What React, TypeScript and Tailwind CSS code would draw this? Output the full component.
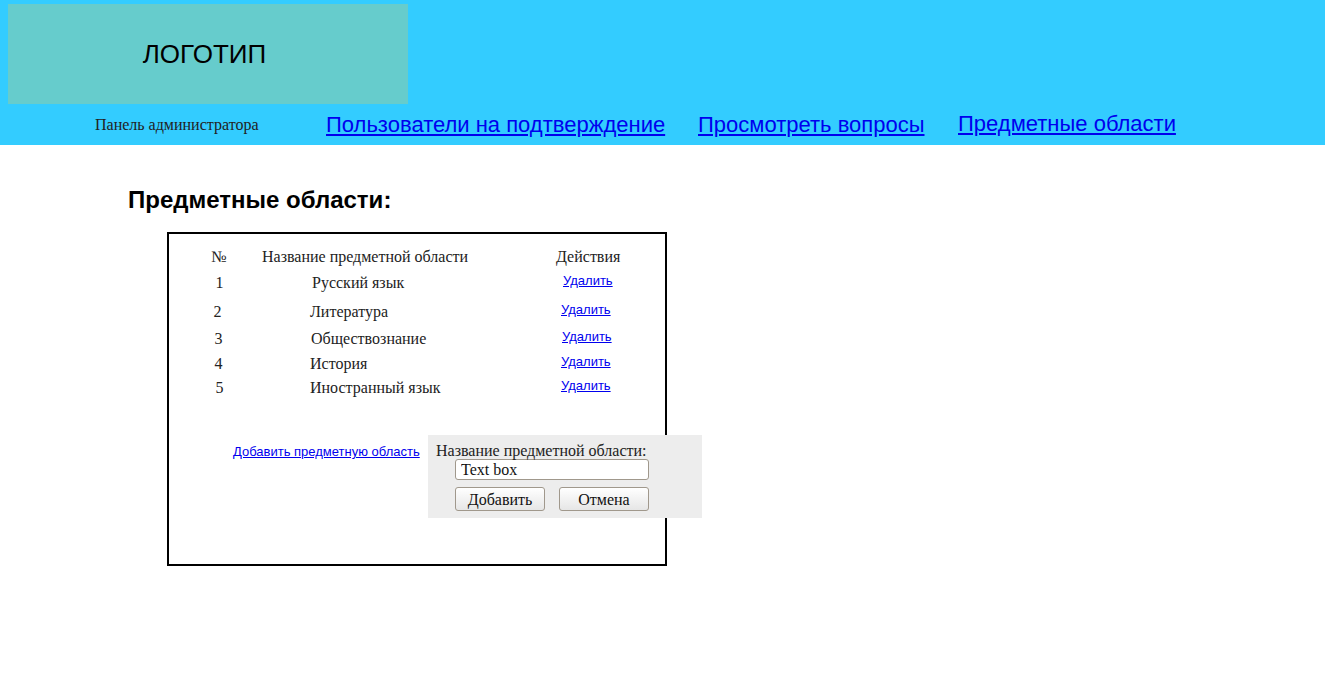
const rows = [
  { n: "1", name: "Русский язык", h: "h-[30px]", num: "pl-[1px]", nm: "ml-[78px]" },
  { n: "2", name: "Литература", h: "h-[28px]", num: "pr-[3px]", nm: "ml-[76px]" },
  { n: "3", name: "Обществознание", h: "h-[26px]", num: "pr-[1px]", nm: "ml-[77px]" },
  { n: "4", name: "История", h: "h-[24px]", num: "pr-[1px]", nm: "ml-[76px]" },
  { n: "5", name: "Иностранный язык", h: "h-[24px]", num: "pl-[1px]", nm: "ml-[76px]" },
];

const serif = "font-['Liberation_Serif',serif]";
const sans = "font-['Liberation_Sans',Arial,sans-serif]";

function Header() {
  return (
    <div className="bg-[#33ccff] h-[145px] pt-1 px-2">
      <div className={`w-[400px] h-[100px] bg-[#66cccc] flex items-center justify-center pr-[7px] text-[26px] text-black ${sans}`}>
        ЛОГОТИП
      </div>
      <nav className="flex items-center h-[41px]">
        <div className={`ml-[87px] w-[231px] shrink-0 text-[16px] text-[#222] ${serif}`}>
          Панель администратора
        </div>
        <div className="w-[372px] shrink-0">
          <a href="#" className={`text-[22px] text-[#0000ee] underline ${sans}`}>
            Пользователи на подтверждение
          </a>
        </div>
        <div className="w-[260px] shrink-0">
          <a href="#" className={`text-[22px] text-[#0000ee] underline ${sans}`}>
            Просмотреть вопросы
          </a>
        </div>
        <div className="mb-[3px]">
          <a href="#" className={`text-[22px] text-[#0000ee] underline ${sans}`}>
            Предметные области
          </a>
        </div>
      </nav>
    </div>
  );
}

function SubjectsTable() {
  return (
    <div className={`ml-[167px] mt-[19px] w-[500px] h-[334px] border-2 border-black text-[16px] text-[#222] ${serif}`}>
      {/* header row */}
      <div className="flex items-center h-[22px] mt-[12px]">
        <div className="ml-[35px] w-[30px] shrink-0 text-center">№</div>
        <div className="ml-[28px] w-[294px] shrink-0">Название предметной области</div>
        <div>Действия</div>
      </div>

      {rows.map((r) => (
        <div key={r.n} className={`flex items-center ${r.h}`}>
          <div className={`ml-[35px] w-[30px] shrink-0 text-center ${r.num}`}>{r.n}</div>
          <div className={`${r.nm} w-[251px] shrink-0`}>{r.name}</div>
          <a href="#" className={`mb-[5px] text-[13px] text-[#0000ee] underline ${sans}`}>
            Удалить
          </a>
        </div>
      ))}

      {/* add form */}
      <div className="flex items-start mt-[35px]">
        <div className="ml-[64px] w-[195px] shrink-0 pt-[4px]">
          <a href="#" className={`text-[13px] text-[#0000ee] underline whitespace-nowrap ${sans}`}>
            Добавить предметную область
          </a>
        </div>
        <div className="w-[274px] h-[83px] shrink-0 bg-[#ededed] pt-[7px] px-[8px]">
          <div className="leading-[17px]">Название предметной области:</div>
          <div className="ml-[19px]">
            <input
              defaultValue="Text box"
              className={`block w-[194px] h-[21px] bg-white border border-[#a0988c] rounded-[3px] px-[5px] text-[16px] text-[#111] outline-none ${serif}`}
            />
            <div className="flex gap-[14px] mt-[7px]">
              <button className="w-[90px] h-[24px] rounded-[3px] border border-[#a0988c] bg-gradient-to-b from-white to-[#e6e6e6] text-[16px] text-[#111]">
                Добавить
              </button>
              <button className="w-[90px] h-[24px] rounded-[3px] border border-[#a0988c] bg-gradient-to-b from-white to-[#e6e6e6] text-[16px] text-[#111]">
                Отмена
              </button>
            </div>
          </div>
        </div>
      </div>
    </div>
  );
}

export default function App() {
  return (
    <div className="w-[1325px] min-h-[695px] bg-white">
      <Header />
      <h1 className={`ml-[128px] mt-[42px] text-[24px] font-bold text-black leading-[26px] ${sans}`}>
        Предметные области:
      </h1>
      <SubjectsTable />
    </div>
  );
}
